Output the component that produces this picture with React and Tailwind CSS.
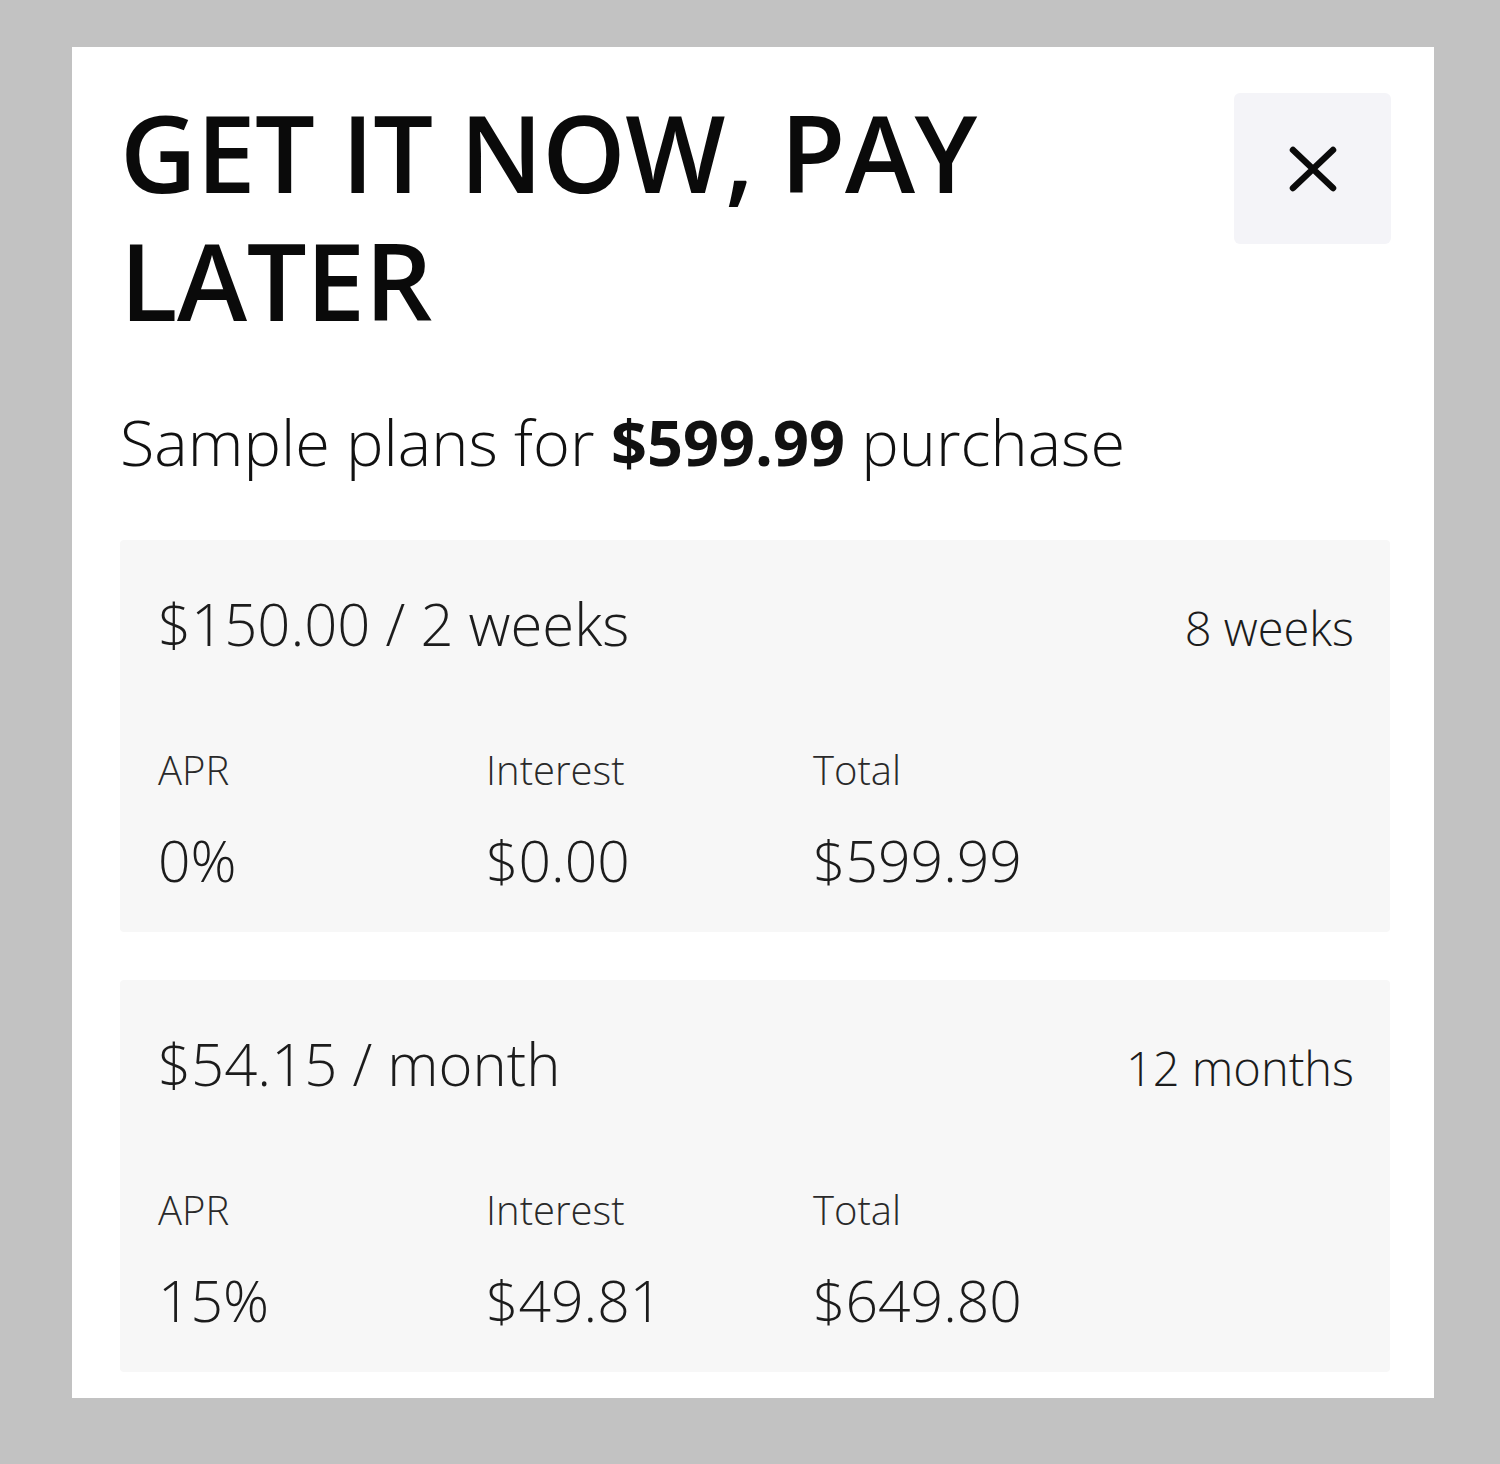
import React from 'react';

const plans = [
  { amount: '$150.00', period: '2 weeks', term: '8 weeks', apr: '0%', interest: '$0.00', total: '$599.99' },
  { amount: '$54.15', period: 'month', term: '12 months', apr: '15%', interest: '$49.81', total: '$649.80' },
];

function CloseIcon() {
  return (
    <svg width="48" height="46" viewBox="0 0 48 46" fill="none">
      <path d="M4 4L44 42M44 4L4 42" stroke="#0a0a0a" strokeWidth="6.5" strokeLinecap="round" />
    </svg>
  );
}

export default function App() {
  return (
    <div className="min-h-screen bg-[#c2c2c2] pt-[47px] pl-[72px] font-['Open_Sans',sans-serif]">
      <div className="w-[1362px] h-[1351px] bg-white pl-[48px] pr-[43px] pt-[41px]">
        {/* Header */}
        <div className="flex justify-between items-start">
          <h1 className="text-[106px] leading-[128px] font-semibold text-[#0a0a0a] tracking-[-0.5px] w-[1000px]">
            GET IT NOW, PAY LATER
          </h1>
          <button className="mt-[5px] w-[157px] h-[151px] rounded-md bg-[#f4f4f8] flex items-center justify-center">
            <CloseIcon />
          </button>
        </div>

        {/* Subtitle */}
        <p className="mt-[58px] text-[63px] leading-[80px] font-light text-[#111]">
          Sample plans for <span className="font-bold">$599.99</span> purchase
        </p>

        {/* Plans */}
        <div className="mt-[58px] mr-[1px] space-y-[48px]">
          {plans.map((p) => (
            <div key={p.amount} className="bg-[#f7f7f7] rounded-sm h-[392px] pl-[38px] pr-[36px] pt-[48px]">
              <div className="flex justify-between items-baseline">
                <p className="text-[58px] leading-[72px] font-light text-[#1c1c1c]">
                  {p.amount} / {p.period}
                </p>
                <p className="text-[47px] leading-[72px] font-light text-[#1c1c1c]">{p.term}</p>
              </div>
              <div className="mt-[78px] grid grid-cols-[328px_327px_1fr]">
                {[
                  ['APR', p.apr],
                  ['Interest', p.interest],
                  ['Total', p.total],
                ].map(([label, value]) => (
                  <div key={label}>
                    <p className="text-[40px] leading-[56px] font-light text-[#2a2a2a]">{label}</p>
                    <p className="mt-[26px] text-[57px] leading-[72px] font-light text-[#1c1c1c]">{value}</p>
                  </div>
                ))}
              </div>
            </div>
          ))}
        </div>
      </div>
    </div>
  );
}
